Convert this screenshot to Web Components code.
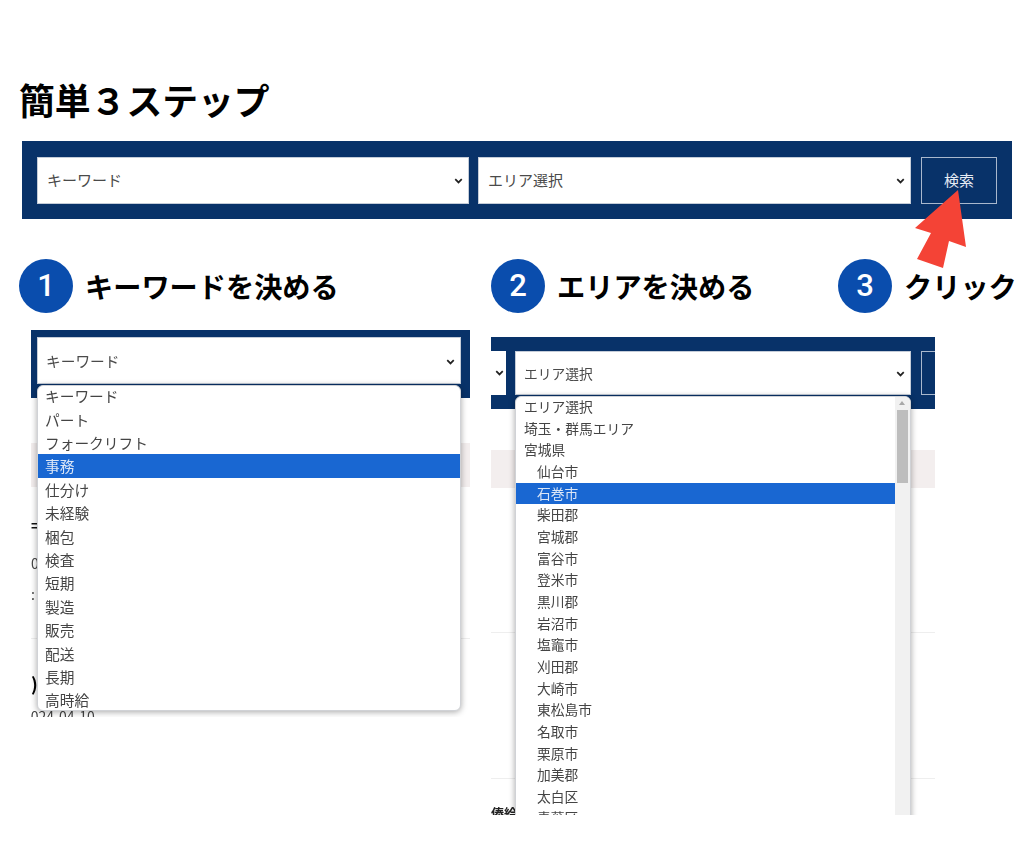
<!DOCTYPE html>
<html lang="ja">
<head>
<meta charset="utf-8">
<title>簡単3ステップ</title>
<style>
  html, body { margin: 0; background: #fff; }
  body { font-family: "Noto Sans CJK JP", "Liberation Sans", sans-serif; width: 1030px; height: 853px; overflow: hidden; }
  .steps { display: grid; grid-template-columns: 472px 347px 1fr; margin: 40px 0 0 19px; }
  .shots { display: flex; align-items: flex-start; margin-left: 31px; }
</style>
</head>
<body>
<page-title>簡単３ステップ</page-title>
<search-bar></search-bar>
<div class="steps">
  <step-head num="1">キーワードを決める</step-head>
  <step-head num="2">エリアを決める</step-head>
  <step-head num="3">クリック</step-head>
</div>
<div class="shots">
  <shot-panel variant="keyword">
    <drop-list slot="drop">
      <drop-item>キーワード</drop-item>
      <drop-item>パート</drop-item>
      <drop-item>フォークリフト</drop-item>
      <drop-item selected>事務</drop-item>
      <drop-item>仕分け</drop-item>
      <drop-item>未経験</drop-item>
      <drop-item>梱包</drop-item>
      <drop-item>検査</drop-item>
      <drop-item>短期</drop-item>
      <drop-item>製造</drop-item>
      <drop-item>販売</drop-item>
      <drop-item>配送</drop-item>
      <drop-item>長期</drop-item>
      <drop-item>高時給</drop-item>
    </drop-list>
  </shot-panel>
  <shot-panel variant="area">
    <drop-list slot="drop" scroll>
      <drop-item>エリア選択</drop-item>
      <drop-item>埼玉・群馬エリア</drop-item>
      <drop-item>宮城県</drop-item>
      <drop-item indent>仙台市</drop-item>
      <drop-item indent selected>石巻市</drop-item>
      <drop-item indent>柴田郡</drop-item>
      <drop-item indent>宮城郡</drop-item>
      <drop-item indent>富谷市</drop-item>
      <drop-item indent>登米市</drop-item>
      <drop-item indent>黒川郡</drop-item>
      <drop-item indent>岩沼市</drop-item>
      <drop-item indent>塩竈市</drop-item>
      <drop-item indent>刈田郡</drop-item>
      <drop-item indent>大崎市</drop-item>
      <drop-item indent>東松島市</drop-item>
      <drop-item indent>名取市</drop-item>
      <drop-item indent>栗原市</drop-item>
      <drop-item indent>加美郡</drop-item>
      <drop-item indent>太白区</drop-item>
      <drop-item indent>青葉区</drop-item>
    </drop-list>
  </shot-panel>
</div>

<script>
const chevron = `<svg width="9" height="6" viewBox="0 0 10 7"><path d="M1.2 1.4 5 5.2 8.8 1.4" fill="none" stroke="#222" stroke-width="2"/></svg>`;

class PageTitle extends HTMLElement {
  constructor() {
    super();
    this.attachShadow({ mode: 'open' }).innerHTML = `
      <style>
        :host { display:block; padding:79px 0 0 19px; height:41px; font-size:35.8px; line-height:40px; font-weight:700; color:#000; }
      </style>
      <slot></slot>`;
  }
}
customElements.define('page-title', PageTitle);

class FakeSelect extends HTMLElement {
  constructor() {
    super();
    this.attachShadow({ mode: 'open' }).innerHTML = `
      <style>
        :host { display:flex; align-items:center; justify-content:space-between; box-sizing:border-box; height:var(--h,47px); background:#fff; border:1px solid #c4ccd8; padding:0 5px 2px 9px; font-size:var(--fs,15px); color:#4a4a4a; overflow:hidden; }
        svg { margin-top:2px; }
      </style>
      <slot></slot>${chevron}`;
  }
}
customElements.define('fake-select', FakeSelect);

class SearchBar extends HTMLElement {
  constructor() {
    super();
    this.attachShadow({ mode: 'open' }).innerHTML = `
      <style>
        :host { display:flex; gap:9px; box-sizing:border-box; width:990px; height:78px; margin:21px 0 0 22px; padding:16px 15px; background:#083269; filter:blur(.3px); position:relative; }
        fake-select { flex:none; }
        .kw { width:432px; }
        .ar { width:433px; }
        .btn { box-sizing:border-box; width:76px; height:47px; margin-left:1px; padding-bottom:2px; border:1px solid #a9b8cd; color:#e6ecf4; font-size:15px; display:flex; align-items:center; justify-content:center; }
        svg { position:absolute; left:893px; top:49px; overflow:visible; }
      </style>
      <fake-select class="kw">キーワード</fake-select>
      <fake-select class="ar">エリア選択</fake-select>
      <div class="btn">検索</div>
      <svg width="60" height="80" viewBox="0 0 60 80"><polygon points="43,0 51,57 34,51 28,78 2,69 16,43 0,38" fill="#f44336"/></svg>`;
  }
}
customElements.define('search-bar', SearchBar);

class StepHead extends HTMLElement {
  constructor() {
    super();
    this.attachShadow({ mode: 'open' }).innerHTML = `
      <style>
        :host { display:flex; align-items:center; gap:12px; height:53px; font-size:28.2px; font-weight:700; color:#000; white-space:nowrap; }
        .num { flex:none; width:54px; height:54px; border-radius:50%; background:#0a4dad; color:#fff; font:500 31px/54px "Roboto","Liberation Sans",sans-serif; text-align:center; }
      </style>
      <span class="num"></span><slot></slot>`;
  }
  connectedCallback() {
    this.shadowRoot.querySelector('.num').textContent = this.getAttribute('num');
  }
}
customElements.define('step-head', StepHead);

class DropItem extends HTMLElement {
  constructor() {
    super();
    this.attachShadow({ mode: 'open' }).innerHTML = `
      <style>
        :host { display:block; height:var(--row); line-height:var(--row); padding-left:var(--pad,8px); font-size:var(--fs); color:#444; white-space:nowrap; }
        :host([indent]) { padding-left:21px; }
        :host([selected]) { background:#1967d2; color:#dbe6f6; }
      </style>
      <slot></slot>`;
  }
}
customElements.define('drop-item', DropItem);

class DropList extends HTMLElement {
  constructor() {
    super();
    this.attachShadow({ mode: 'open' }).innerHTML = `
      <style>
        :host { display:flex; box-sizing:border-box; background:#fff; border:1px solid #d0d2d6; border-radius:6px 6px var(--br,6px) var(--br,6px); box-shadow:0 1px 6px rgba(0,0,0,.35); overflow:hidden; }
        .items { flex:1; min-width:0; margin-top:var(--shift,0); }
        .bar { display:none; flex:none; position:relative; width:15px; background:#f1f1f1; }
        :host([scroll]) .bar { display:block; }
        .up { position:absolute; left:4px; top:4px; border:3.5px solid transparent; border-top:0; border-bottom:4px solid #a8a8a8; }
        .thumb { position:absolute; left:2px; top:13px; width:11px; height:73px; background:#bdbdbd; }
      </style>
      <div class="items"><slot></slot></div>
      <div class="bar"><span class="up"></span><span class="thumb"></span></div>`;
  }
}
customElements.define('drop-list', DropList);

// screenshot crop: page content underneath, the open select list lies on top
class ShotPanel extends HTMLElement {
  constructor() {
    super();
    this.attachShadow({ mode: 'open' });
  }
  connectedCallback() {
    const area = this.getAttribute('variant') === 'area';
    this.shadowRoot.innerHTML = area ? `
      <style>
        :host { display:block; flex:none; position:relative; overflow:hidden; background:#fff; width:444px; height:478px; margin:25px 0 0 21px; filter:blur(.3px); --fs:13.75px; --row:21.67px; --shift:-1px; }
        .bar { display:flex; gap:9px; box-sizing:border-box; height:72px; padding:14px 0 0; background:#083269; margin-bottom:41px; --h:44px; --fs:13.75px; }
        .cut { flex:none; width:15px; height:44px; background:#fff; display:flex; align-items:center; justify-content:flex-end; padding-right:2px; box-sizing:border-box; }
        .sel { flex:none; width:396px; padding-left:8px; padding-bottom:0; }
        .btn { flex:none; width:20px; height:44px; margin-left:1px; border:1px solid #a9b8cd; box-sizing:border-box; }
        .band { height:38px; background:#f3eeee; }
        .line { height:1px; background:#eee; }
        .l1 { margin-top:144px; }
        .l2 { margin-top:145px; }
        .frag { margin-top:26px; font-size:13px; line-height:16px; font-weight:700; color:#222; }
        .drop { position:absolute; left:24px; top:59px; width:396px; height:440px; }
        ::slotted(drop-list) { height:100%; --br:0; }
      </style>
      <div class="bar"><div class="cut">${chevron}</div><fake-select class="sel">エリア選択</fake-select><div class="btn"></div></div>
      <div class="band"></div>
      <div class="line l1"></div>
      <div class="line l2"></div>
      <div class="frag">俸給</div>
      <div class="drop"><slot name="drop"></slot></div>` : `
      <style>
        :host { display:block; flex:none; position:relative; overflow:hidden; background:#fff; width:439px; height:387px; margin-top:18px; filter:blur(.3px); --fs:14.7px; --row:23.4px; --shift:-1.7px; --pad:7px; }
        .bar { box-sizing:border-box; height:68px; padding:7px 9px 0 6px; background:#083269; margin-bottom:45px; --h:47px; --fs:14.7px; }
        .bar fake-select { padding-left:8px; padding-bottom:0; }
        .band { height:44px; background:#f3eeee; }
        .frag { position:relative; font-size:14px; line-height:16px; color:#444; }
        .a { margin-top:30px; font-weight:700; color:#111; }
        .b { margin-top:22px; }
        .c { margin-top:15px; }
        .line { height:1px; background:#eee; margin-top:36px; }
        .d { margin:35px 0 0; font-weight:700; font-size:18px; line-height:18px; color:#000; }
        .e { margin-top:16px; margin-left:-8px; }
        .drop { position:absolute; left:6px; top:55px; width:424px; height:326px; }
        ::slotted(drop-list) { height:100%; }
      </style>
      <div class="bar"><fake-select>キーワード</fake-select></div>
      <div class="band"></div>
      <div class="frag a">=</div>
      <div class="frag b">0</div>
      <div class="frag c">:</div>
      <div class="line"></div>
      <div class="frag d">)</div>
      <div class="frag e">2024-04-10</div>
      <div class="drop"><slot name="drop"></slot></div>`;
  }
}
customElements.define('shot-panel', ShotPanel);
</script>
</body>
</html>
